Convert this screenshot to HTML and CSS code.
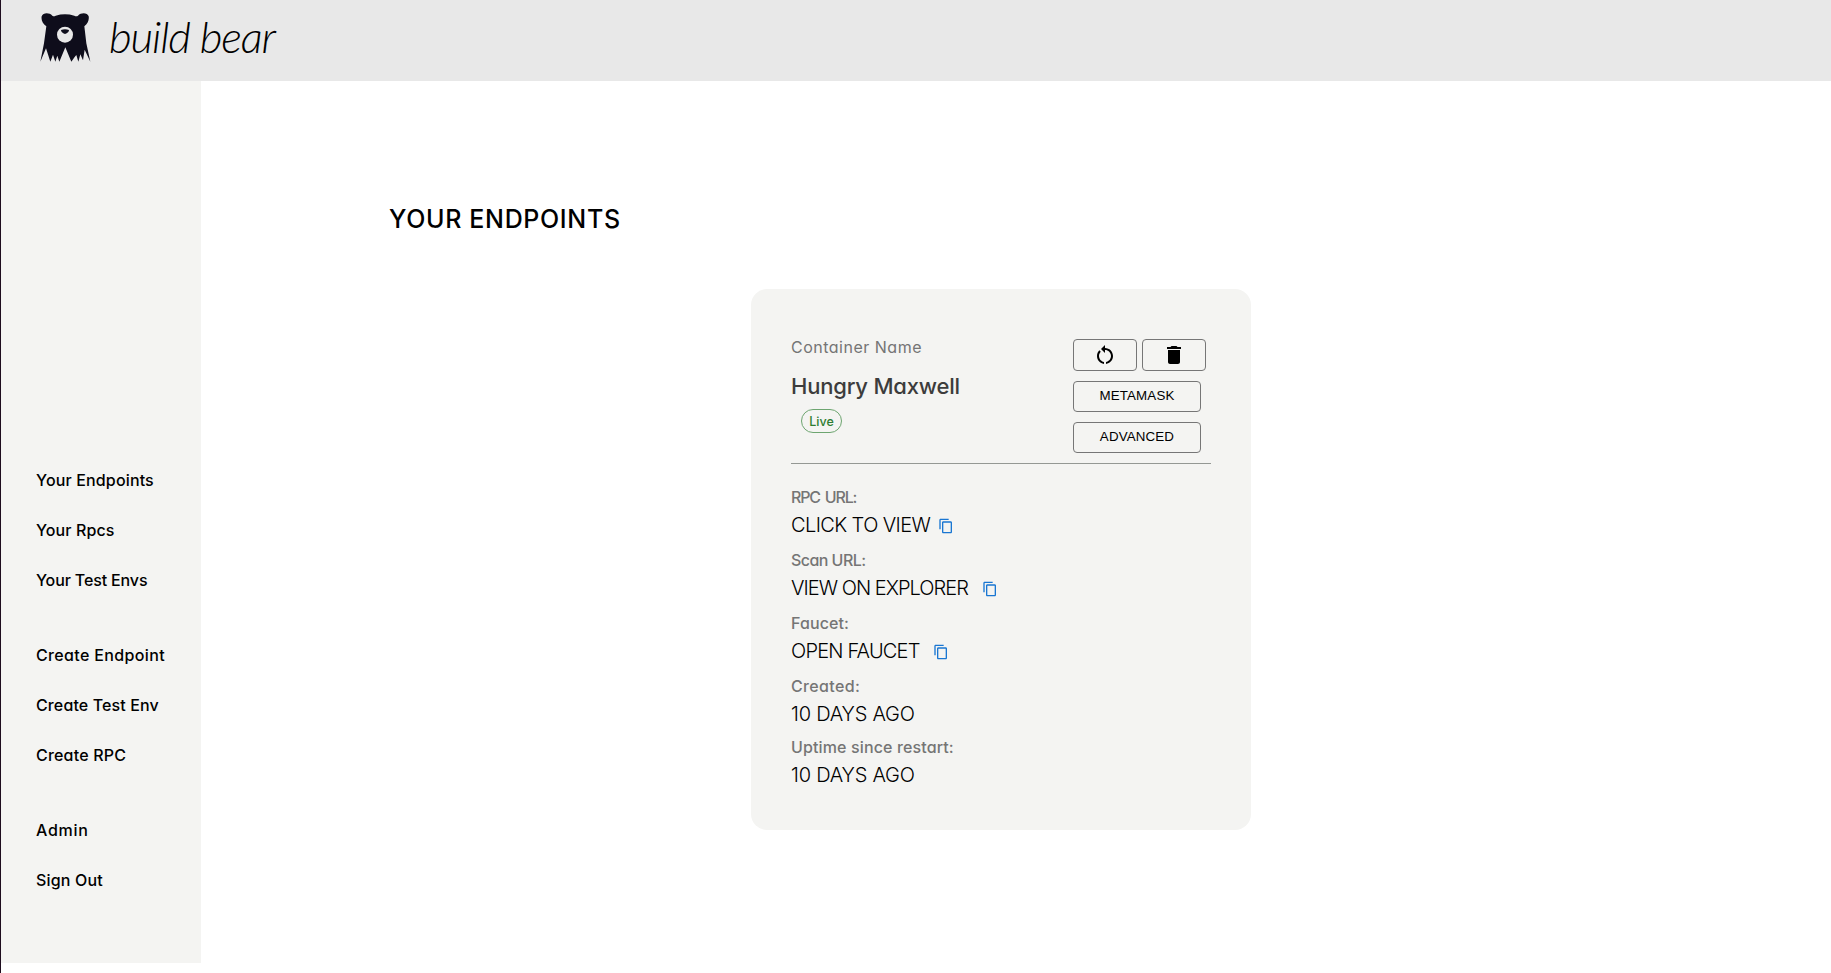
FILE: index.html
```html
<!DOCTYPE html>
<html lang="en">
<head>
<meta charset="utf-8">
<title>Build Bear</title>
<link rel="stylesheet" href="styles.css">
</head>
<body>
<svg width="0" height="0" class="defs" aria-hidden="true">
  <symbol id="copy" viewBox="0 0 24 24"><path d="M16 1H4c-1.1 0-2 .9-2 2v14h2V3h12V1zm3 4H8c-1.1 0-2 .9-2 2v14c0 1.1.9 2 2 2h11c1.1 0 2-.9 2-2V7c0-1.1-.9-2-2-2zm0 16H8V7h11v14z"/></symbol>
</svg>
<header class="header">
  <svg class="bear" viewBox="30 24 156 150">
    <path fill="#0e0d1b" d="M49 64 C38 56 33 46 35 34 C39 22 58 22 67 32 Q71 35 77 32 Q105 24 133 32 Q139 35 144 32 C153 22 172 22 176 34 C178 46 173 56 163 64 L169 115 L181 170 L164 134 L159 166 L151 148 L145 170 L139 150 L134 156 L124 170 L106 127 L88 170 L82 152 L76 170 L69 149 L61 170 L48 130 L31 170 L42 115 Z"/>
    <circle cx="105" cy="89" r="24" fill="#e8e8e8"/>
    <path fill="#0e0d1b" d="M93 75 Q105 71 117 75 Q117 83 105 87 Q93 83 93 75Z"/>
  </svg>
  <span class="wordmark">build bear</span>
</header>
<div class="body">
  <nav class="sidebar">
    <div class="group"><a class="n1">Your Endpoints</a><a class="n2">Your Rpcs</a><a class="n3">Your Test Envs</a></div>
    <div class="group"><a class="n4">Create Endpoint</a><a class="n5">Create Test Env</a><a class="n6">Create RPC</a></div>
    <div class="group"><a class="n7">Admin</a><a class="n8">Sign Out</a></div>
  </nav>
  <main class="main">
    <h1 class="title">YOUR ENDPOINTS</h1>
    <section class="card">
      <div class="top">
        <div class="info">
          <div class="label cname">Container Name</div>
          <div class="name">Hungry Maxwell</div>
          <span class="chip">Live</span>
        </div>
        <div class="actions">
          <div class="pair">
            <button class="btn small" aria-label="Restart"><svg viewBox="0 0 24 24" width="24" height="24"><path d="M12 5V2L8 6l4 4V7c3.31 0 6 2.69 6 6 0 2.97-2.17 5.43-5 5.91v2.02c3.95-.49 7-3.85 7-7.93 0-4.42-3.58-8-8-8zM6 13c0-1.65.67-3.15 1.76-4.24L6.34 7.34C4.9 8.79 4 10.79 4 13c0 4.08 3.05 7.44 7 7.93v-2.02c-2.83-.48-5-2.94-5-5.91z"/></svg></button>
            <button class="btn small" aria-label="Delete"><svg viewBox="0 0 24 24" width="24" height="24"><path d="M6 19c0 1.1.9 2 2 2h8c1.1 0 2-.9 2-2V7H6v12zM19 4h-3.5l-1-1h-5l-1 1H5v2h14V4z"/></svg></button>
          </div>
          <button class="btn">METAMASK</button>
          <button class="btn">ADVANCED</button>
        </div>
      </div>
      <div class="rows">
        <div class="row"><div class="label l1">RPC URL:</div><div class="value"><span class="v1">CLICK TO VIEW</span><svg class="copy"><use href="#copy"/></svg></div></div>
        <div class="row"><div class="label l2">Scan URL:</div><div class="value"><span class="v2">VIEW ON EXPLORER</span><svg class="copy"><use href="#copy"/></svg></div></div>
        <div class="row"><div class="label l3">Faucet:</div><div class="value"><span class="v3">OPEN FAUCET</span><svg class="copy"><use href="#copy"/></svg></div></div>
        <div class="row tight"><div class="label l4">Created:</div><div class="value"><span class="v4">10 DAYS AGO</span></div></div>
        <div class="row"><div class="label l5">Uptime since restart:</div><div class="value"><span class="v4">10 DAYS AGO</span></div></div>
      </div>
    </section>
  </main>
</div>
</body>
</html>
```
FILE: styles.css
```css
* { box-sizing: border-box; }
body {
  margin: 0;
  height: 973px;
  overflow: hidden;
  border-left: 1px solid #1d0c1e;
  background: #fff;
  color: #000;
  font-family: Inter, "Open Sans", sans-serif;
  font-feature-settings: "cv11";
}
.defs { position: absolute; }
.header {
  display: flex;
  height: 81px;
  padding: 13px 0 0 39px;
  background: #e8e8e8;
}
.bear { width: 52px; height: 50px; flex: none; }
.wordmark {
  margin-left: 17px;
  font: italic 300 44px/47px Lato, sans-serif;
  letter-spacing: -1.15px;
  white-space: nowrap;
}
.body { display: flex; }
.sidebar {
  display: flex;
  flex-direction: column;
  justify-content: flex-end;
  gap: 25px;
  width: 200px;
  height: 882px;
  padding: 0 0 58px 35px;
  background: #f4f4f2;
}
.group { display: flex; flex-direction: column; align-items: flex-start; }
.group a { line-height: 50px; font-size: 16px; font-weight: 500; white-space: nowrap; }
.n1 { letter-spacing: .15px; }
.n2 { letter-spacing: .1px; }
.n3 { letter-spacing: -.13px; }
.n4 { letter-spacing: .35px; }
.n5 { letter-spacing: .12px; }
.n6 { letter-spacing: .2px; }
.n7 { letter-spacing: .7px; }
.n8 { letter-spacing: .17px; }
.main { flex: 1; padding: 120px 0 0 189px; }
.title { margin: 0 0 51px -1px; font-size: 25px; line-height: 37px; font-weight: 500; letter-spacing: .66px; }
.card {
  width: 500px;
  height: 541px;
  margin-left: 361px;
  padding: 50px 40px 0;
  border-radius: 16px;
  background: #f4f4f2;
}
.top {
  display: flex;
  justify-content: space-between;
  height: 125px;
  padding-right: 5px;
  border-bottom: 1px solid #949894;
}
.label { color: #757575; font-size: 16px; line-height: 26px; font-weight: 500; white-space: nowrap; }
.cname { font-weight: 400; line-height: 17px; letter-spacing: .5px; }
.name { margin-top: 14px; color: #3c3c3c; font-size: 22px; line-height: 32px; font-weight: 500; letter-spacing: -.2px; white-space: nowrap; }
.chip {
  display: flex;
  align-items: center;
  justify-content: center;
  width: 41px;
  height: 24px;
  margin: 7px 0 0 10px;
  border: 1px solid #6da570;
  border-radius: 12px;
  color: #2e7d32;
  font-size: 12.5px;
  font-weight: 500;
}
.actions { width: 133px; display: flex; flex-direction: column; gap: 10px; }
.pair { display: flex; gap: 5px; }
.btn {
  display: flex;
  align-items: center;
  justify-content: center;
  width: 128px;
  height: 31px;
  padding: 0 0 2px;
  border: 1px solid #767676;
  border-radius: 4px;
  background: transparent;
  color: #000;
  font: 13.333px "Liberation Sans", Arial, sans-serif;
  letter-spacing: .15px;
}
.btn.small { width: 64px; height: 32px; padding: 0; }
.rows { padding-top: 20px; }
.row { margin-bottom: 7px; }
.row.tight { margin-bottom: 5px; }
.l1 { letter-spacing: -1.2px; word-spacing: 2px; }
.l2 { letter-spacing: -.55px; }
.l3 { letter-spacing: .1px; }
.l4 { letter-spacing: .35px; }
.l5 { letter-spacing: .13px; }
.value { display: flex; align-items: center; height: 30px; font-size: 20px; line-height: 30px; font-weight: 300; white-space: nowrap; }
.value span { flex: none; }
.copy { width: 16px; height: 16px; margin-top: 2px; fill: #1976d2; }
.v1 { width: 147px; letter-spacing: -.6px; }
.v2 { width: 191px; letter-spacing: -.97px; }
.v3 { width: 142px; letter-spacing: -.8px; }
.v4 { letter-spacing: -.22px; }
```
